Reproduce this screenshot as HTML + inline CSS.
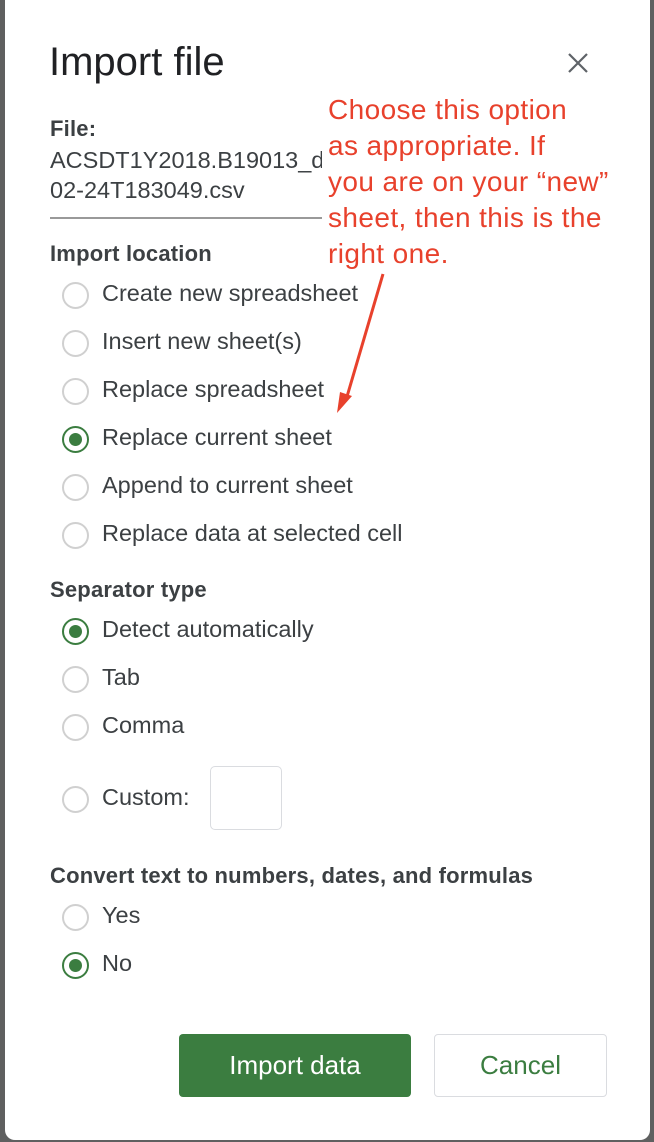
<!DOCTYPE html>
<html><head><style>
body{margin:0;width:654px;height:1142px;background:#5f6060;position:relative;overflow:hidden;font-family:"Liberation Sans",Arial,sans-serif;color:#3c4043}
.dlg{position:absolute;left:5px;top:-10px;width:645px;height:1150px;background:#fff;border-radius:10px}
.t{position:absolute;white-space:nowrap}
.r{position:absolute;left:62px;width:27px;height:27px;border:2px solid #d0d0d0;border-radius:50%;box-sizing:border-box}
.r.on{border-color:#3b7d40}
.r.on::after{content:"";position:absolute;left:5px;top:5px;width:13px;height:13px;border-radius:50%;background:#3b7d40}
.l{position:absolute;left:102px;font-size:23.5px;color:#3c4043;white-space:nowrap}
.h{position:absolute;left:50px;font-size:22px;font-weight:bold;color:#3c4043;white-space:nowrap;letter-spacing:0.2px}
.red{position:absolute;left:328px;top:92px;font-size:28px;line-height:36px;color:#e8412c;letter-spacing:0.4px;white-space:nowrap}
</style></head><body>
<div class="dlg"></div>
<div class="t" style="left:49px;top:40px;font-size:40px;color:#202124">Import file</div>
<svg style="position:absolute;left:567px;top:52px" width="22" height="22"><path d="M2 2L20 20M20 2L2 20" stroke="#5f6368" stroke-width="2.2"/></svg>
<div class="h" style="top:116px">File:</div>
<div class="t" style="left:50px;top:145px;font-size:23.5px;line-height:30px;width:272px;overflow:hidden">ACSDT1Y2018.B19013_data<br>02-24T183049.csv</div>
<div style="position:absolute;left:50px;top:217px;width:272px;height:2px;background:#999"></div>
<div class="h" style="top:241px">Import location</div>
<div class="r" style="top:282px"></div><div class="l" style="top:280px">Create new spreadsheet</div>
<div class="r" style="top:330px"></div><div class="l" style="top:328px">Insert new sheet(s)</div>
<div class="r" style="top:378px"></div><div class="l" style="top:376px">Replace spreadsheet</div>
<div class="r on" style="top:426px"></div><div class="l" style="top:424px">Replace current sheet</div>
<div class="r" style="top:474px"></div><div class="l" style="top:472px">Append to current sheet</div>
<div class="r" style="top:522px"></div><div class="l" style="top:520px">Replace data at selected cell</div>
<div class="h" style="top:577px">Separator type</div>
<div class="r on" style="top:618px"></div><div class="l" style="top:616px">Detect automatically</div>
<div class="r" style="top:666px"></div><div class="l" style="top:664px">Tab</div>
<div class="r" style="top:714px"></div><div class="l" style="top:712px">Comma</div>
<div class="r" style="top:786px"></div><div class="l" style="top:784px">Custom:</div>
<div style="position:absolute;left:210px;top:766px;width:70px;height:62px;border:1.5px solid #dadce0;border-radius:5px"></div>
<div class="h" style="top:863px">Convert text to numbers, dates, and formulas</div>
<div class="r" style="top:904px"></div><div class="l" style="top:902px">Yes</div>
<div class="r on" style="top:952px"></div><div class="l" style="top:950px">No</div>
<div style="position:absolute;left:179px;top:1034px;width:232px;height:63px;background:#3b7d40;border-radius:4px;color:#fff;font-size:26px;text-align:center;line-height:63px">Import data</div>
<div style="position:absolute;left:434px;top:1034px;width:173px;height:63px;border:1.5px solid #dadce0;box-sizing:border-box;border-radius:4px;color:#3b7d40;font-size:26px;text-align:center;line-height:60px">Cancel</div>
<div class="red">Choose this option<br>as appropriate. If<br>you are on your “new”<br>sheet, then this is the<br>right one.</div>
<svg style="position:absolute;left:0;top:0" width="654" height="1142"><path d="M383 274L346 400" stroke="#e8412c" stroke-width="3"/><path d="M337 413L340 392L352 396Z" fill="#e8412c"/></svg>
</body></html>
